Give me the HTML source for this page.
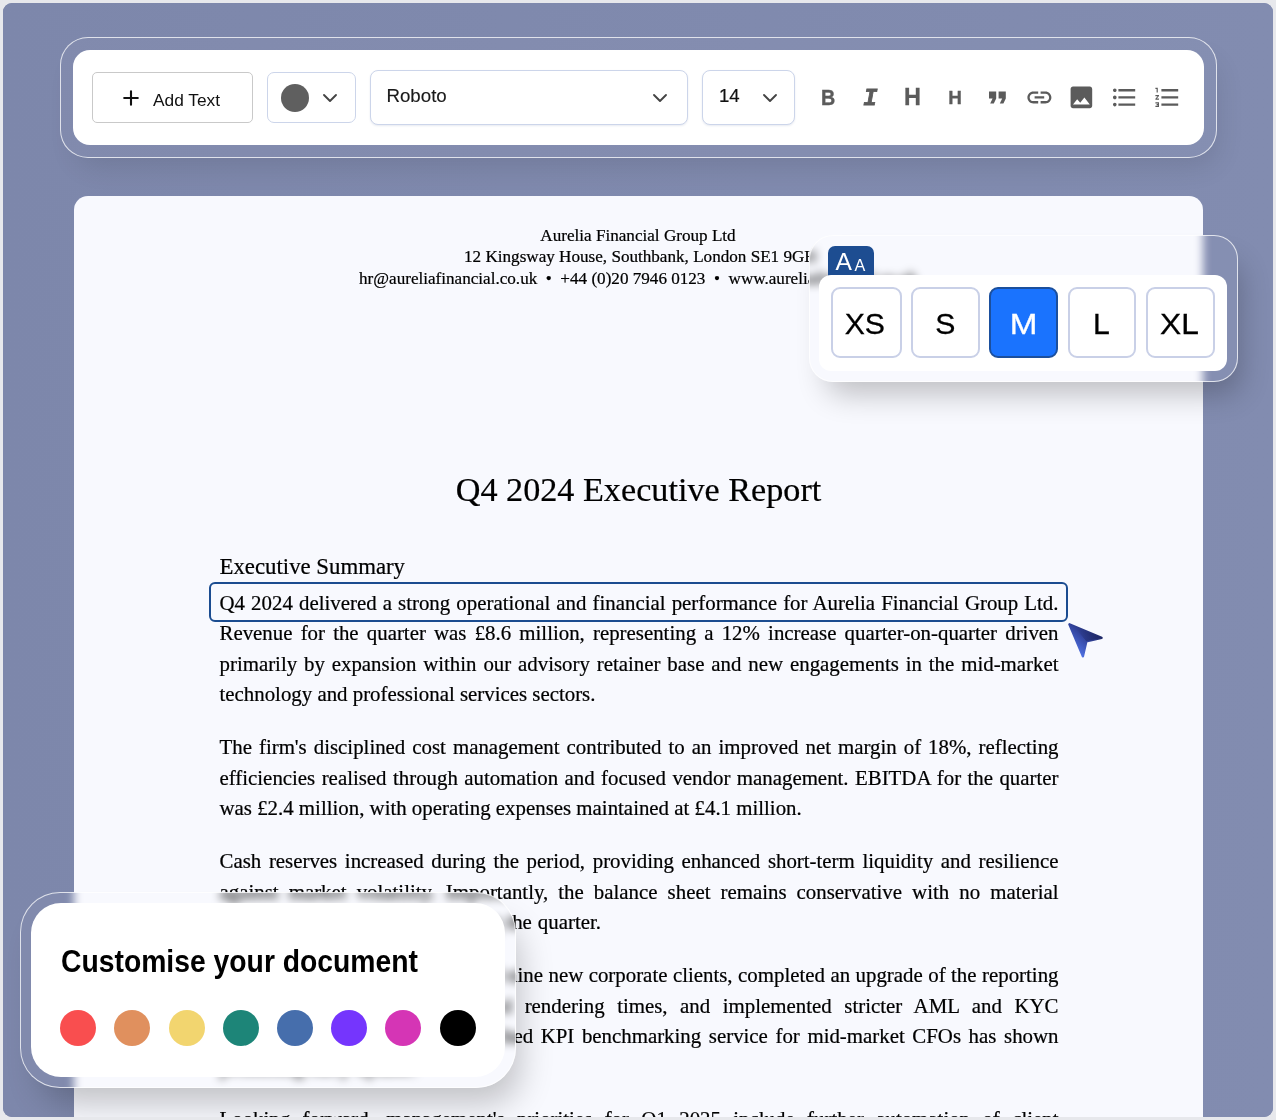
<!DOCTYPE html>
<html lang="en">
<head>
<meta charset="utf-8">
<title>Document editor</title>
<style>
*{box-sizing:border-box;margin:0;padding:0}
html,body{width:1276px;height:1120px;overflow:hidden;background:#e7e8ec}
body{position:relative;font-family:"Liberation Sans",sans-serif;color:#111}
.stage{position:absolute;left:3px;top:3px;width:1270px;height:1114px;border-radius:9px;background:#7f89ad;overflow:hidden}
.abs{position:absolute}
/* everything inside stage is positioned in page coords via wrapper offset */
.wrap{position:absolute;left:-3px;top:-3px;width:1276px;height:1120px;will-change:transform}

/* glass ring */
.glass{position:absolute;border:1px solid rgba(255,255,255,.75);background:rgba(255,255,255,.03);}
.shadow-xl{box-shadow:10px 20px 30px -8px rgba(0,0,0,.24)}

/* toolbar */
#tb-ring{z-index:2;left:60px;top:37px;width:1156.5px;height:120.5px;border-radius:28px}
#tb{z-index:3;left:73px;top:50px;width:1131px;height:95px;border-radius:17px;background:#fff}
.btn{position:absolute;background:#fff;border:1px solid #c9c9c9;border-radius:5px}
.sel{position:absolute;background:#fff;border:1px solid #ccd5ea;border-radius:8px;box-shadow:0 1px 2px rgba(60,80,140,.12)}
.sel span,.btn span{position:absolute;white-space:nowrap}

/* page */
#doclayer{position:absolute;left:0;top:0;width:1276px;height:1120px;background:linear-gradient(90deg,#7d87ab,#828cb0);filter:url(#gb)}
#page{left:74px;top:195.5px;width:1129.4px;height:940px;border-radius:14px 14px 0 0;background:#f8f9fe}
.doc{font-family:"Liberation Serif",serif;color:#000;-webkit-text-stroke:.22px #000}
.hl{position:absolute;left:0;width:1276px;text-align:center;font-size:17.12px;line-height:21.5px;white-space:pre}
.ln{position:absolute;left:219.5px;width:839px;font-size:20.87px;line-height:30px;height:30px;white-space:nowrap;text-align:justify;text-align-last:justify}
.ln.last{text-align:left;text-align-last:left}

.ico{position:absolute;top:33.2px;width:28.8px;height:28.8px;fill:#5b5b5b;color:#5b5b5b}
.ico .tx{position:absolute;line-height:28.8px;height:28.8px;white-space:nowrap}

.sz{position:absolute;top:12.2px;width:69.5px;height:71px;border:2px solid #c9d0e7;border-radius:9px;background:#fff;font-size:30.2px;line-height:70px;text-align:center;color:#000}
.sz span{position:relative;display:inline-block;-webkit-text-stroke:.3px currentColor}
.sz.on{background:#1a73fe;border-color:#1b4f9d;color:#fff}
.dot{position:absolute;top:106.8px;width:36.2px;height:36.2px;border-radius:50%}
.shadow-w{box-shadow:12px 24px 34px -9px rgba(0,0,0,.23)}
</style>
</head>
<body>
<div class="stage"><div class="wrap">


<!-- toolbar -->
<div id="tb-ring" class="glass" style="box-shadow:8px 16px 28px -8px rgba(0,0,0,.11)"></div>
<div id="tb" class="abs">
  <div class="btn" style="left:19px;top:22px;width:161px;height:51px">
    <svg class="abs" style="left:28.85px;top:15.7px" width="18" height="18" viewBox="0 0 18 18"><path d="M9 2.2v13.6M2.2 9h13.6" stroke="#111" stroke-width="2.1" stroke-linecap="round" fill="none"/></svg>
    <span id="addtext" style="left:59.6px;top:17.7px;font-size:15.8px;line-height:20px;color:#111;transform:scaleX(1.096);transform-origin:0 0">Add Text</span>
  </div>
  <div class="sel" style="left:194px;top:22px;width:89px;height:51px;border-radius:7px;box-shadow:none">
    <div class="abs" style="left:12.9px;top:10.8px;width:28.3px;height:28.3px;border-radius:50%;background:#5f5f5f"></div>
    <svg class="abs" style="left:53.3px;top:18.9px" width="18" height="12" viewBox="0 0 18 12"><path d="M3 3l6 6 6-6" stroke="#444" stroke-width="1.9" stroke-linecap="round" stroke-linejoin="round" fill="none"/></svg>
  </div>
  <div class="sel" style="left:296.7px;top:19.8px;width:318.3px;height:55.3px">
    <span id="roboto" style="-webkit-text-stroke:.15px #1a1a1a;left:15.8px;top:13.5px;font-size:18.7px;line-height:24px;color:#1a1a1a">Roboto</span>
    <svg class="abs" style="left:280.05px;top:21.1px" width="18" height="12" viewBox="0 0 18 12"><path d="M3 3l6 6 6-6" stroke="#444" stroke-width="1.9" stroke-linecap="round" stroke-linejoin="round" fill="none"/></svg>
  </div>
  <div class="sel" style="left:628.6px;top:19.8px;width:93.4px;height:55.3px">
    <span id="fs14" style="-webkit-text-stroke:.2px #111;left:16.4px;top:13.3px;font-size:18.6px;line-height:24px;color:#111">14</span>
    <svg class="abs" style="left:58.65px;top:21.1px" width="18" height="12" viewBox="0 0 18 12"><path d="M3 3l6 6 6-6" stroke="#444" stroke-width="1.9" stroke-linecap="round" stroke-linejoin="round" fill="none"/></svg>
  </div>
  <!-- icons -->
  <div class="ico" style="left:741px"><span class="tx" style="font-weight:700;font-size:22.7px;left:6.9px;top:-.7px;transform:scaleX(.87);transform-origin:0 50%;-webkit-text-stroke:.35px #5b5b5b">B</span></div>
  <div class="ico" style="left:783.1px"><span class="tx" style="font-family:'Liberation Mono',monospace;font-weight:700;font-style:italic;font-size:23.4px;left:7.2px;top:1.9px;-webkit-text-stroke:.8px #5b5b5b">I</span></div>
  <div class="ico" style="left:825.2px"><span class="tx" style="font-weight:700;font-size:23px;left:6.3px;top:0px;transform:scaleX(1.02);transform-origin:0 50%;-webkit-text-stroke:.3px #5b5b5b">H</span></div>
  <div class="ico" style="left:867.3px"><span class="tx" style="font-weight:700;font-size:18.9px;left:7.9px;top:1.1px;transform:scaleX(1.0);transform-origin:0 50%;-webkit-text-stroke:.3px #5b5b5b">H</span></div>
  <svg class="ico" style="left:910px" viewBox="0 0 24 24"><path d="M6 17h3l2-4V7H5v6h3zm8 0h3l2-4V7h-6v6h3z"/></svg>
  <svg class="ico" style="left:951.5px" viewBox="0 0 24 24"><path d="M3.9 12c0-1.71 1.39-3.1 3.1-3.1h4V7H7c-2.76 0-5 2.24-5 5s2.24 5 5 5h4v-1.9H7c-1.71 0-3.1-1.39-3.1-3.1zM8 13h8v-2H8v2zm9-6h-4v1.9h4c1.71 0 3.1 1.39 3.1 3.1s-1.39 3.1-3.1 3.1h-4V17h4c2.76 0 5-2.24 5-5s-2.24-5-5-5z"/></svg>
  <svg class="ico" style="left:993.9px" viewBox="0 0 24 24"><path d="M21 19V5c0-1.1-.9-2-2-2H5c-1.1 0-2 .9-2 2v14c0 1.1.9 2 2 2h14c1.100 0 2-.9 2-2zM8.500 13.500l2.500 3.010L14.500 12l4.500 6H5l3.500-4.500z"/></svg>
  <svg class="ico" style="left:1036.55px" viewBox="0 0 24 24"><path d="M4 10.500c-.83 0-1.500.67-1.500 1.500s.67 1.500 1.500 1.500 1.500-.67 1.500-1.500-.67-1.500-1.500-1.500zm0-6c-.83 0-1.500.67-1.500 1.500S3.170 7.500 4 7.500 5.500 6.830 5.500 6 4.830 4.500 4 4.500zm0 12c-.83 0-1.500.68-1.500 1.500s.68 1.500 1.500 1.500 1.500-.68 1.500-1.500-.67-1.500-1.500-1.500zM7 19h14v-2H7v2zm0-6h14v-2H7v2zm0-8v2h14V5H7z"/></svg>
  <svg class="ico" style="left:1079.8px" viewBox="0 0 24 24"><path d="M2 17h2v.5H3v1h1v.5H2v1h3v-4H2v1zm1-9h1V4H2v1h1v3zm-1 3h1.800L2 13.100v.9h3v-1H3.200L5 10.900V10H2v1zm5-6v2h14V5H7zm0 14h14v-2H7v2zm0-6h14v-2H7v2z"/></svg>
</div>

<!-- page -->
<svg width="0" height="0" style="position:absolute" aria-hidden="true">
  <defs>
    <g id="ringmask">
      <rect x="20" y="892.3" width="495.5" height="195.5" rx="40" fill="#fff"/>
      <rect x="809" y="235" width="429" height="146.5" rx="24" fill="#fff"/>
    </g>
    <filter id="gb" filterUnits="userSpaceOnUse" x="0" y="0" width="1276" height="1120" color-interpolation-filters="sRGB">
      <feGaussianBlur in="SourceGraphic" stdDeviation="4" result="b"/>
      <feImage href="#ringmask" x="0" y="0" width="1276" height="1120" result="m"/>
      <feComposite in="b" in2="m" operator="in" result="bm"/>
      <feMerge><feMergeNode in="SourceGraphic"/><feMergeNode in="bm"/></feMerge>
    </filter>
  </defs>
</svg>
<div id="doclayer">
<div id="page" class="abs"></div>
<div class="doc">
  <div class="hl" style="top:224.8px">Aurelia Financial Group Ltd</div>
  <div class="hl" style="top:245.8px;left:2.4px">12 Kingsway House, Southbank, London SE1 9GH</div>
  <div class="hl" style="top:267.5px">hr@aureliafinancial.co.uk  •  +44 (0)20 7946 0123  •  www.aureliafinancial.co.uk</div>
  <div id="title" class="abs" style="left:0;width:1277px;top:470px;text-align:center;font-size:34.2px;line-height:40px;white-space:nowrap">Q4 2024 Executive Report</div>
  <div id="h2" class="abs" style="left:219.5px;top:552.5px;font-size:22.8px;line-height:28px;white-space:nowrap">Executive Summary</div>
  <div class="abs" style="left:208.8px;top:582px;width:858.8px;height:40.2px;border:2px solid #1b4c90;border-radius:6px"></div>
  <div class="ln" style="top:587.73px">Q4 2024 delivered a strong operational and financial performance for Aurelia Financial Group Ltd.</div>
  <div class="ln" style="top:618.13px">Revenue for the quarter was £8.6 million, representing a 12% increase quarter-on-quarter driven</div>
  <div class="ln" style="top:648.53px">primarily by expansion within our advisory retainer base and new engagements in the mid-market</div>
  <div class="ln last" style="top:678.93px">technology and professional services sectors.</div>
  <div class="ln" style="top:732.23px">The firm's disciplined cost management contributed to an improved net margin of 18%, reflecting</div>
  <div class="ln" style="top:762.63px">efficiencies realised through automation and focused vendor management. EBITDA for the quarter</div>
  <div class="ln last" style="top:793.03px">was £2.4 million, with operating expenses maintained at £4.1 million.</div>
  <div class="ln" style="top:846.33px">Cash reserves increased during the period, providing enhanced short-term liquidity and resilience</div>
  <div class="ln" style="top:876.73px">against market volatility. Importantly, the balance sheet remains conservative with no material</div>
  <div class="ln last" style="top:907.13px;word-spacing:.73px">changes in credit facilities during the quarter.</div>
  <div class="ln" style="top:960.43px">Operationally, the firm welcomed nine new corporate clients, completed an upgrade of the reporting</div>
  <div class="ln" style="top:990.83px">platform that reduced dashboard rendering times, and implemented stricter AML and KYC</div>
  <div class="ln" style="top:1021.23px">controls. The team's newly launched KPI benchmarking service for mid-market CFOs has shown</div>
  <div class="ln last" style="top:1051.63px">promising early uptake.</div>
  <div class="ln" style="top:1103.9px">Looking forward, management's priorities for Q1 2025 include further automation of client</div>
  <svg class="abs" style="left:1063px;top:617px" width="48" height="48" viewBox="0 0 48 48">
    <defs>
      <linearGradient id="cg" x1="0.9" y1="0.25" x2="0.3" y2="0.95"><stop offset="0" stop-color="#1c2560"/><stop offset=".45" stop-color="#33459f"/><stop offset="1" stop-color="#5072e4"/></linearGradient>
      <linearGradient id="cg2" x1="0.2" y1="0" x2="0.8" y2="1"><stop offset="0" stop-color="#1d2663" stop-opacity="0"/><stop offset="1" stop-color="#1b235c" stop-opacity=".55"/></linearGradient>
    </defs>
    <path d="M6.4 7.3 L38.6 20.8 L23.4 24.3 L19.9 39.3 Z" fill="url(#cg)" stroke="url(#cg)" stroke-width="2.4" stroke-linejoin="round"/>
    <path d="M12 10.6 L38.6 20.8 L23.4 24.3 Z" fill="url(#cg2)"/>
  </svg>
</div>
</div>

<!-- size popover -->
<div id="pop-ring" class="glass shadow-xl" style="left:809px;top:235px;width:429px;height:146.5px;border-radius:24px"></div>
<div class="abs" id="aatab" style="left:828px;top:245.5px;width:46px;height:36px;border-radius:7px 7px 0 0;background:#1d4d91;color:#fff">
  <span class="abs" style="left:7.4px;top:2.6px;font-size:24.6px;line-height:28px">A</span>
  <span class="abs" style="left:26.5px;top:9.4px;font-size:16.2px;line-height:20px">A</span>
</div>
<div class="abs" id="pop" style="left:819px;top:275px;width:408px;height:96px;border-radius:12px;background:#fff">
  <div class="sz" style="left:12.3px;width:70.6px"><span style="left:-1.8px">XS</span></div>
  <div class="sz" style="left:91.6px;width:69px"><span style="left:.3px">S</span></div>
  <div class="sz on" style="left:170.2px;width:69px"><span style="left:-.6px;transform:scaleX(1.1)">M</span></div>
  <div class="sz" style="left:248.7px;width:68.8px"><span style="left:-.6px">L</span></div>
  <div class="sz" style="left:327px;width:68.8px"><span style="left:-.8px;transform:scaleX(1.05)">XL</span></div>
</div>

<!-- customise widget -->
<div id="cw-ring" class="glass shadow-w" style="left:20px;top:892.3px;width:495.5px;height:195.5px;border-radius:40px"></div>
<div class="abs" id="cw" style="left:31px;top:903px;width:474px;height:174px;border-radius:30px;background:#fff">
  <div id="cwt" class="abs" style="left:30.3px;top:41.3px;font-weight:700;font-size:31px;line-height:36px;color:#000;white-space:nowrap;transform:scaleX(.913);transform-origin:0 0">Customise your document</div>
  <i class="dot" style="left:29.1px;background:#f94e4f"></i>
  <i class="dot" style="left:83.3px;background:#e0905e"></i>
  <i class="dot" style="left:137.5px;background:#f2d56f"></i>
  <i class="dot" style="left:191.7px;background:#1d8578"></i>
  <i class="dot" style="left:245.9px;background:#466eac"></i>
  <i class="dot" style="left:300.1px;background:#7535fd"></i>
  <i class="dot" style="left:354.3px;background:#d535b5"></i>
  <i class="dot" style="left:408.5px;background:#000"></i>
</div>

</div></div>
</body>
</html>
